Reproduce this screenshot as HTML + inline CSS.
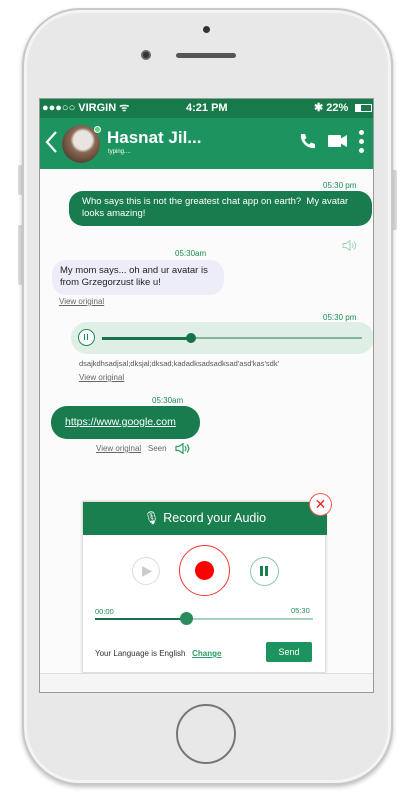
<!DOCTYPE html>
<html><head><meta charset="utf-8"><style>
*{margin:0;padding:0;box-sizing:border-box}
body{width:400px;height:793px;background:#fff;position:relative;overflow:hidden;font-family:"Liberation Sans",sans-serif}
.a{position:absolute}
.phone{left:22px;top:8px;width:371px;height:777px;border-radius:58px;background:#e8e8e8;border:2px solid #c8c8c8;box-shadow:inset 0 0 0 3px #f4f4f4,0 2px 4px rgba(0,0,0,.25)}
.screen{left:39px;top:98px;width:335px;height:595px;background:#fbfbfb;border:1px solid #999;overflow:hidden}
.g{color:#1e8a56}
</style></head><body>
<div class="a" style="left:18px;top:165px;width:5px;height:30px;background:#ddd;border-radius:2px"></div>
<div class="a" style="left:18px;top:225px;width:5px;height:60px;background:#ddd;border-radius:2px"></div>
<div class="a" style="left:392px;top:170px;width:5px;height:60px;background:#ddd;border-radius:2px"></div>
<div class="a phone"></div>
<div class="a" style="left:203px;top:26px;width:7px;height:7px;border-radius:50%;background:#333"></div>
<div class="a" style="left:141px;top:50px;width:10px;height:10px;border-radius:50%;background:#333;border:2px solid #666"></div>
<div class="a" style="left:176px;top:53px;width:60px;height:5px;border-radius:3px;background:#555"></div>
<div class="a" style="left:176px;top:704px;width:60px;height:60px;border-radius:50%;border:2px solid #777"></div>
<div class="a screen">
 <div class="a" style="left:0;top:0;width:335px;height:19px;background:#177a4a;color:#fff;font-size:11px;font-weight:bold;line-height:19px">
  <span class="a" style="left:2px">●●●○○ VIRGIN ᯤ</span>
  <span class="a" style="left:146px">4:21 PM</span>
  <span class="a" style="left:274px">✱ 22%</span>
  <span class="a" style="left:315px;top:5px;width:17px;height:8px;border:1px solid #fff"><span class="a" style="left:0;top:0;width:5px;height:6px;background:#fff"></span></span>
 </div>
 <div class="a" style="left:0;top:19px;width:335px;height:51px;background:#1d9460;color:#fff">
  <svg class="a" style="left:4px;top:12px" width="14" height="24"><path d="M12 2L3 12l9 10" stroke="#fff" stroke-width="2.2" fill="none"/></svg>
  <div class="a" style="left:22px;top:7px;width:38px;height:38px;border-radius:50%;background:radial-gradient(circle at 55% 40%,#e9e4df 0 30%,#8a6a55 40%,#5c4636 70%)"></div>
  <div class="a" style="left:54px;top:8px;width:7px;height:7px;border-radius:50%;background:#5fd17d;border:1px solid #fff"></div>
  <div class="a" style="left:67px;top:10px;font-size:17px;font-weight:bold">Hasnat Jil...</div>
  <div class="a" style="left:68px;top:31px;font-size:6px">typing....</div>
  <svg class="a" style="left:258px;top:14px" width="18" height="18"><path d="M3 2l4 0 1.5 4-2 1.5c1 2.5 2.5 4 5 5l1.5-2 4 1.5v4c-8 1-15-6-14-14z" fill="#fff"/></svg>
  <div class="a" style="left:288px;top:17px;width:13px;height:12px;background:#fff;border-radius:1px"></div>
  <svg class="a" style="left:300px;top:16px" width="8" height="14"><path d="M0 5l7-4v12l-7-4z" fill="#fff"/></svg>
  <div class="a" style="left:319px;top:12px;width:5px;height:5px;border-radius:50%;background:#fff;box-shadow:0 9px 0 #fff,0 18px 0 #fff"></div>
 </div>
 <div class="a g" style="left:283px;top:82px;font-size:8px">05:30 pm</div>
 <div class="a" style="left:29px;top:92px;width:303px;height:35px;background:#187c4e;border-radius:14px;color:#fff;font-size:9.5px;line-height:12px;padding:5px 13px">Who says this is not the greatest chat app on earth?&nbsp; My avatar looks amazing!</div>
 <svg class="a" style="left:302px;top:141px" width="15" height="11"><path d="M1 3.5h3l4-3v10l-4-3H1z" fill="none" stroke="#9fd6b4" stroke-width="1"/><path d="M10 3q2 2.5 0 5M12 1.5q3.5 4 0 8" fill="none" stroke="#9fd6b4" stroke-width="1"/></svg>
 <div class="a g" style="left:135px;top:150px;font-size:8px">05:30am</div>
 <div class="a" style="left:12px;top:161px;width:172px;height:35px;background:#ecedf8;border-radius:14px;color:#222;font-size:9.5px;line-height:12px;padding:5px 8px">My mom says... oh and ur avatar is from Grzegorzust like u!</div>
 <div class="a" style="left:19px;top:198px;font-size:8px;color:#666;text-decoration:underline">View original</div>
 <div class="a g" style="left:283px;top:214px;font-size:8px">05:30 pm</div>
 <div class="a" style="left:31px;top:223px;width:303px;height:32px;background:#e0efe6;border-radius:16px"></div>
 <div class="a" style="left:38px;top:230px;width:17px;height:17px;border-radius:50%;background:#fff;border:1.5px solid #1e8a56"><div class="a" style="left:5px;top:4px;width:4px;height:6px;border-left:1.5px solid #1e8a56;border-right:1.5px solid #1e8a56"></div></div>
 <div class="a" style="left:62px;top:238px;width:90px;height:3px;background:#17714a"></div>
 <div class="a" style="left:152px;top:238px;width:170px;height:2px;background:#7fb79a"></div>
 <div class="a" style="left:146px;top:234px;width:10px;height:10px;border-radius:50%;background:#17714a"></div>
 <div class="a" style="left:39px;top:260px;font-size:7.5px;color:#555">dsajkdhsadjsal;dksjal;dksad;kadadksadsadksad'asd'kas'sdk'</div>
 <div class="a" style="left:39px;top:274px;font-size:8px;color:#666;text-decoration:underline">View original</div>
 <div class="a g" style="left:112px;top:297px;font-size:8px">05:30am</div>
 <div class="a" style="left:11px;top:307px;width:149px;height:33px;background:#187c4e;border-radius:16px;color:#fff;font-size:10.5px;line-height:33px;padding-left:14px;text-decoration:underline">https://www.google.com</div>
 <div class="a" style="left:56px;top:345px;font-size:8px;color:#666"><u>View original</u>&nbsp;&nbsp; Seen</div>
 <svg class="a" style="left:135px;top:344px" width="15" height="11"><path d="M1 3.5h3l4-3v10l-4-3H1z" fill="none" stroke="#2b9e63" stroke-width="1.2"/><path d="M10 3q2 2.5 0 5M12 1.5q3.5 4 0 8" fill="none" stroke="#2b9e63" stroke-width="1.2"/></svg>
 <!-- popup -->
 <div class="a" style="left:42px;top:402px;width:244px;height:172px;background:#fff;border:1px solid #ddd;box-shadow:0 0 3px rgba(0,0,0,.15)">
  <div class="a" style="left:0;top:0;width:244px;height:33px;background:#1a7f4f;color:#fff;font-size:12.5px;line-height:33px;text-align:center">🎙︎ Record your Audio</div>
  <div class="a" style="left:49px;top:55px;width:28px;height:28px;border-radius:50%;border:1px solid #ddd"><svg class="a" style="left:8px;top:7px" width="12" height="13"><path d="M1 1l10 5.5L1 12z" fill="#ccc"/></svg></div>
  <div class="a" style="left:96px;top:43px;width:51px;height:51px;border-radius:50%;border:1.5px solid #f33"><div class="a" style="left:15px;top:15px;width:19px;height:19px;border-radius:50%;background:#f00"></div></div>
  <div class="a" style="left:167px;top:55px;width:29px;height:29px;border-radius:50%;border:1.5px solid #8fcaa6"><div class="a" style="left:9px;top:8px;width:3px;height:10px;background:#1a7f4f"></div><div class="a" style="left:14px;top:8px;width:3px;height:10px;background:#1a7f4f"></div></div>
  <div class="a g" style="left:12px;top:105px;font-size:7.5px">00:00</div>
  <div class="a g" style="left:208px;top:104px;font-size:7.5px">05:30</div>
  <div class="a" style="left:12px;top:116px;width:92px;height:2px;background:#17714a"></div>
  <div class="a" style="left:104px;top:116px;width:126px;height:1.5px;background:#a9d3bb"></div>
  <div class="a" style="left:97px;top:110px;width:13px;height:13px;border-radius:50%;background:#2a8c5c"></div>
  <div class="a" style="left:12px;top:147px;font-size:8px;color:#333">Your Language is English&nbsp;&nbsp; <span style="color:#2a9e63;text-decoration:underline;font-weight:bold">Change</span></div>
  <div class="a" style="left:183px;top:140px;width:46px;height:20px;background:#1d9460;border-radius:2px;color:#fff;font-size:9px;line-height:20px;text-align:center">Send</div>
 </div>
 <div class="a" style="left:269px;top:394px;width:23px;height:23px;border-radius:50%;background:#fff;border:1.5px solid #f55;color:#e22;font-size:14px;line-height:20px;text-align:center">✕</div>
 <div class="a" style="left:0;top:574px;width:335px;height:21px;background:#f5f5f5;border-top:1px solid #ddd"></div>
</div>
</body></html>
